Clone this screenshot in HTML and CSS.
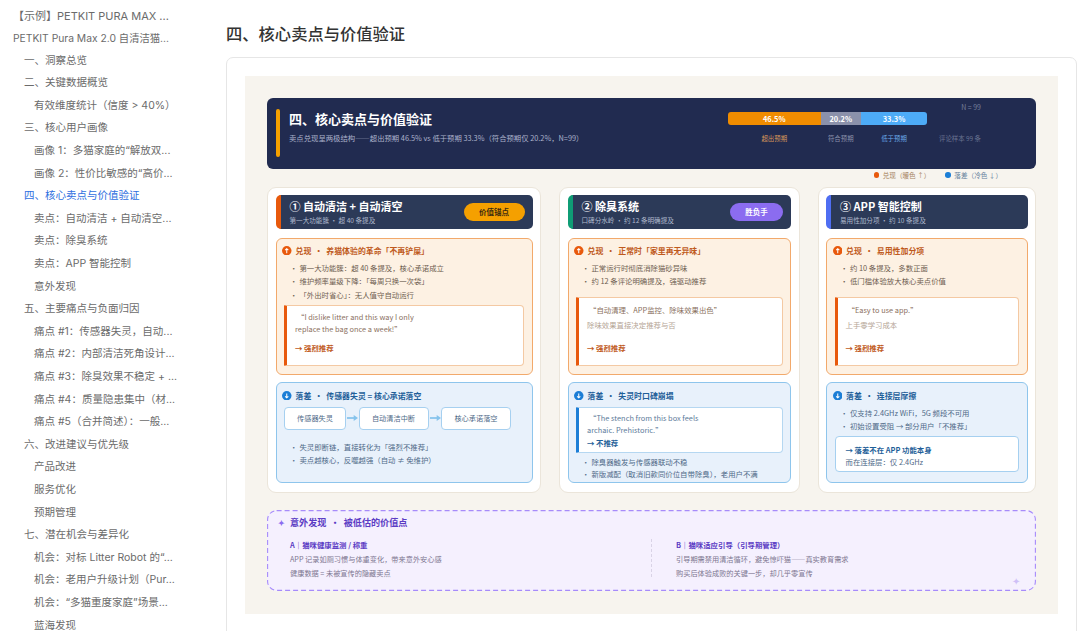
FILE: index.html
```html
<!DOCTYPE html>
<html lang="zh-CN">
<head>
  <meta charset="UTF-8">
  <title>四、核心卖点与价值验证</title>
  <link rel="stylesheet" href="styles.css">
</head>
<body>

<nav class="toc">
  <a class="lv1 root">【示例】PETKIT PURA MAX ...</a>
  <a class="lv1 doc">PETKIT Pura Max 2.0 自清洁猫...</a>
  <a class="lv2">一、洞察总览</a>
  <a class="lv2">二、关键数据概览</a>
  <a class="lv3">有效维度统计（信度 &gt; 40%）</a>
  <a class="lv2">三、核心用户画像</a>
  <a class="lv3">画像 1：多猫家庭的“解放双...</a>
  <a class="lv3">画像 2：性价比敏感的“高价...</a>
  <a class="lv2 active">四、核心卖点与价值验证</a>
  <a class="lv3">卖点：自动清洁 + 自动清空...</a>
  <a class="lv3">卖点：除臭系统</a>
  <a class="lv3">卖点：APP 智能控制</a>
  <a class="lv3">意外发现</a>
  <a class="lv2">五、主要痛点与负面归因</a>
  <a class="lv3">痛点 #1：传感器失灵，自动...</a>
  <a class="lv3">痛点 #2：内部清洁死角设计...</a>
  <a class="lv3">痛点 #3：除臭效果不稳定 + ...</a>
  <a class="lv3">痛点 #4：质量隐患集中（材...</a>
  <a class="lv3">痛点 #5（合并简述）：一般...</a>
  <a class="lv2">六、改进建议与优先级</a>
  <a class="lv3">产品改进</a>
  <a class="lv3">服务优化</a>
  <a class="lv3">预期管理</a>
  <a class="lv2">七、潜在机会与差异化</a>
  <a class="lv3">机会：对标 Litter Robot 的“...</a>
  <a class="lv3">机会：老用户升级计划（Pur...</a>
  <a class="lv3">机会：“多猫重度家庭”场景...</a>
  <a class="lv3">蓝海发现</a>
</nav>

<main class="content">
  <h2 class="page-title">四、核心卖点与价值验证</h2>

  <div class="frame">
    <div class="canvas">

      <header class="hero">
        <span class="hero-accent"></span>
        <div class="hero-text">
          <h3>四、核心卖点与价值验证</h3>
          <p>卖点兑现呈两极结构——超出预期 46.5% vs 低于预期 33.3%（符合预期仅 20.2%，N=99）</p>
        </div>
        <div class="chart">
          <div class="chart-n">N = 99</div>
          <div class="chart-grid">
            <div class="seg seg-over">46.5%</div>
            <div class="seg seg-meet">20.2%</div>
            <div class="seg seg-under">33.3%</div>
            <div></div>
            <div class="lab lab-over">超出预期</div>
            <div class="lab lab-meet">符合预期</div>
            <div class="lab lab-under">低于预期</div>
            <div class="lab lab-total">评论样本 99 条</div>
          </div>
        </div>
      </header>

      <div class="legend">
        <span class="legend-item warm"><i></i>兑现（暖色 ↑）</span>
        <span class="legend-item cold"><i></i>落差（冷色 ↓）</span>
      </div>

      <div class="cols">

        <section class="card">
          <div class="card-head head-orange">
            <div class="head-text">
              <h4>① 自动清洁 + 自动清空</h4>
              <p>第一大功能簇 · 超 40 条提及</p>
            </div>
            <span class="badge badge-orange">价值锚点</span>
          </div>
          <div class="panel up">
            <div class="panel-title">
              <svg class="dir" viewBox="0 0 12 12"><circle cx="6" cy="6" r="6" fill="#e8590c"/><path d="M6 9V3.4M4 5.3l2-2 2 2" fill="none" stroke="#fff" stroke-width="1.3"/></svg>
              <span>兑现&nbsp;&nbsp;·&nbsp;&nbsp;养猫体验的革命「不再铲屎」</span>
            </div>
            <ul>
              <li>第一大功能簇：超 40 条提及，核心承诺成立</li>
              <li>维护频率量级下降：「每周只换一次袋」</li>
              <li>「外出时省心」：无人值守自动运行</li>
            </ul>
            <div class="quote quote-short">
              <p class="en">“I dislike litter and this way I only<br>replace the bag once a week!”</p>
              <strong>→ 强烈推荐</strong>
            </div>
          </div>
          <div class="panel down">
            <div class="panel-title">
              <svg class="dir" viewBox="0 0 12 12"><circle cx="6" cy="6" r="6" fill="#1c7ed6"/><path d="M6 3v5.6M4 6.7l2 2 2-2" fill="none" stroke="#fff" stroke-width="1.3"/></svg>
              <span>落差&nbsp;&nbsp;·&nbsp;&nbsp;传感器失灵 = 核心承诺落空</span>
            </div>
            <div class="flow">
              <span class="step step-a">传感器失灵</span>
              <svg class="flow-arrow" viewBox="0 0 13 8"><path d="M1 4h8" stroke="#85c3ec" stroke-width="1.8"/><path d="M8 .8 12.5 4 8 7.2z" fill="#85c3ec"/></svg>
              <span class="step step-b">自动清洁中断</span>
              <svg class="flow-arrow" viewBox="0 0 13 8"><path d="M1 4h8" stroke="#85c3ec" stroke-width="1.8"/><path d="M8 .8 12.5 4 8 7.2z" fill="#85c3ec"/></svg>
              <span class="step step-b">核心承诺落空</span>
            </div>
            <ul class="list-flow">
              <li>失灵即断链，直接转化为「强烈不推荐」</li>
              <li>卖点越核心，反噬越强（自动 ≠ 免维护）</li>
            </ul>
          </div>
        </section>

        <section class="card">
          <div class="card-head head-green">
            <div class="head-text">
              <h4>② 除臭系统</h4>
              <p>口碑分水岭 · 约 12 条明确提及</p>
            </div>
            <span class="badge badge-purple">胜负手</span>
          </div>
          <div class="panel up">
            <div class="panel-title">
              <svg class="dir" viewBox="0 0 12 12"><circle cx="6" cy="6" r="6" fill="#e8590c"/><path d="M6 9V3.4M4 5.3l2-2 2 2" fill="none" stroke="#fff" stroke-width="1.3"/></svg>
              <span>兑现&nbsp;&nbsp;·&nbsp;&nbsp;正常时「家里再无异味」</span>
            </div>
            <ul>
              <li>正常运行时彻底消除猫砂异味</li>
              <li>约 12 条评论明确提及，强驱动推荐</li>
            </ul>
            <div class="quote quote-tall">
              <p class="en">“自动清理、APP监控、除味效果出色”</p>
              <p class="note">除味效果直接决定推荐与否</p>
              <strong>→ 强烈推荐</strong>
            </div>
          </div>
          <div class="panel down">
            <div class="panel-title">
              <svg class="dir" viewBox="0 0 12 12"><circle cx="6" cy="6" r="6" fill="#1c7ed6"/><path d="M6 3v5.6M4 6.7l2 2 2-2" fill="none" stroke="#fff" stroke-width="1.3"/></svg>
              <span>落差&nbsp;&nbsp;·&nbsp;&nbsp;失灵时口碑崩塌</span>
            </div>
            <div class="quote quote-blue">
              <p class="en">“The stench from this box feels<br>archaic. Prehistoric.”</p>
              <strong>→ 不推荐</strong>
            </div>
            <ul class="list-after">
              <li>除臭器触发与传感器联动不稳</li>
              <li>新版减配（取消旧款同价位自带除臭），老用户不满</li>
            </ul>
          </div>
        </section>

        <section class="card">
          <div class="card-head head-blue">
            <div class="head-text">
              <h4>③ APP 智能控制</h4>
              <p>易用性加分项 · 约 10 条提及</p>
            </div>
          </div>
          <div class="panel up">
            <div class="panel-title">
              <svg class="dir" viewBox="0 0 12 12"><circle cx="6" cy="6" r="6" fill="#e8590c"/><path d="M6 9V3.4M4 5.3l2-2 2 2" fill="none" stroke="#fff" stroke-width="1.3"/></svg>
              <span>兑现&nbsp;&nbsp;·&nbsp;&nbsp;易用性加分项</span>
            </div>
            <ul>
              <li>约 10 条提及，多数正面</li>
              <li>低门槛体验放大核心卖点价值</li>
            </ul>
            <div class="quote quote-tall">
              <p class="en">“Easy to use app.”</p>
              <p class="note">上手零学习成本</p>
              <strong>→ 强烈推荐</strong>
            </div>
          </div>
          <div class="panel down">
            <div class="panel-title">
              <svg class="dir" viewBox="0 0 12 12"><circle cx="6" cy="6" r="6" fill="#1c7ed6"/><path d="M6 3v5.6M4 6.7l2 2 2-2" fill="none" stroke="#fff" stroke-width="1.3"/></svg>
              <span>落差&nbsp;&nbsp;·&nbsp;&nbsp;连接层摩擦</span>
            </div>
            <ul class="list-top">
              <li>仅支持 2.4GHz WiFi，5G 频段不可用</li>
              <li>初始设置受阻 → 部分用户「不推荐」</li>
            </ul>
            <div class="verdict">
              <strong>→ 落差不在 APP 功能本身</strong>
              <p>而在连接层：仅 2.4GHz</p>
            </div>
          </div>
        </section>

      </div>

      <section class="extra">
        <svg class="extra-border" viewBox="0 0 769 81"><rect x=".6" y=".6" width="767.8" height="79.8" rx="9" fill="none" stroke="#a78bfa" stroke-width="1.1" stroke-dasharray="5 3"/></svg>
        <div class="extra-title"><span class="spark">✦</span><span>意外发现&nbsp;&nbsp;·&nbsp;&nbsp;被低估的价值点</span></div>
        <div class="extra-cols">
          <div class="extra-col">
            <h5>A｜猫咪健康监测 / 称重</h5>
            <p>APP 记录如厕习惯与体重变化，带来意外安心感</p>
            <p>健康数据 = 未被宣传的隐藏卖点</p>
          </div>
          <div class="extra-col extra-col-b">
            <h5>B｜猫咪适应引导（引导期管理）</h5>
            <p>引导期需禁用清洁循环，避免惊吓猫——真实教育需求</p>
            <p>购买后体验成败的关键一步，却几乎零宣传</p>
          </div>
        </div>
        <div class="extra-foot">✦</div>
      </section>

    </div>
  </div>
</main>

</body>
</html>
```

FILE: styles.css
```css
* {
  box-sizing: border-box;
}

html,
body {
  height: 631px;
  margin: 0;
  overflow: hidden;
}

body {
  display: flex;
  background-color: #fff;
  font-family: "Inter", "Noto Sans CJK SC", sans-serif;
}

h2, h3, h4, h5, p, ul {
  margin: 0;
  padding: 0;
}

/* sidebar */
.toc {
  display: flex;
  flex-direction: column;
  flex: none;
  width: 226px;
  padding-top: 4.5px;
}

.toc a {
  flex: none;
  height: 22.6px;
  line-height: 22.6px;
  font-size: 10.5px;
  color: #6b6b6b;
  white-space: nowrap;
}

.lv1 {
  padding-left: 13px;
}

.toc a.root {
  font-size: 11px;
}

.toc a.doc {
  font-size: 10.3px;
}

.lv2 {
  padding-left: 24px;
}

.lv3 {
  padding-left: 34px;
}

.toc a.active {
  color: #2f6fe0;
}

/* main */
.content {
  flex: 1;
  min-width: 0;
  padding-right: 3px;
}

.page-title {
  height: 57px;
  padding-top: 22px;
  line-height: 24px;
  font-size: 16.3px;
  font-weight: 500;
  color: #333;
}

.frame {
  height: 600px;
  padding: 18px 18px 0;
  border: 1px solid #e6e6e6;
  border-radius: 7px;
}

.canvas {
  height: 538px;
  padding: 22px;
  background-color: #f7f4ee;
  font-family: "Noto Sans CJK SC", sans-serif;
}

/* hero */
.hero {
  display: flex;
  height: 71px;
  padding-left: 9px;
  background-color: #212b50;
  border-radius: 6px;
}

.hero-accent {
  flex: none;
  width: 4px;
  height: 48px;
  margin-top: 11px;
  background-color: #f5a000;
  border-radius: 2px;
}

.hero-text {
  flex: 1;
  padding: 13px 0 0 9px;
}

.hero-text h3 {
  line-height: 16px;
  font-size: 13px;
  font-weight: 700;
  color: #fff;
}

.hero-text p {
  margin-top: 6px;
  line-height: 10px;
  font-size: 7.35px;
  color: #aab1ca;
  white-space: nowrap;
}

.chart {
  flex: none;
  width: 253px;
  margin-right: 55px;
  padding-top: 4.5px;
}

.chart-n {
  height: 9.5px;
  line-height: 9px;
  font-size: 7px;
  text-align: right;
  color: #767f9c;
}

.chart-grid {
  display: grid;
  grid-template-columns: 92.5px 40.5px 66px 54px;
  grid-template-rows: 13px auto;
  row-gap: 8.5px;
}

.seg {
  line-height: 13px;
  font-size: 7.4px;
  font-weight: 700;
  text-align: center;
  color: #fff;
}

.seg-over {
  background-color: #f08c00;
  border-radius: 3px 0 0 3px;
}

.seg-meet {
  background-color: #8b91ab;
}

.seg-under {
  background-color: #4dabf7;
  border-radius: 0 3px 3px 0;
}

.lab {
  line-height: 9px;
  font-size: 6.4px;
  text-align: center;
  white-space: nowrap;
}

.lab-over {
  color: #d9985a;
}

.lab-meet {
  color: #8b91ab;
}

.lab-under {
  color: #6aa8e8;
}

.lab-total {
  text-align: right;
  color: #6a7390;
}

/* legend */
.legend {
  display: flex;
  justify-content: flex-end;
  gap: 15px;
  height: 12px;
  margin-bottom: 5.5px;
  padding-right: 34px;
  line-height: 12px;
  font-size: 6.6px;
}

.legend-item {
  display: flex;
  align-items: center;
  gap: 3.5px;
}

.legend-item i {
  width: 5.5px;
  height: 5.5px;
  border-radius: 50%;
}

.warm {
  color: #a5835f;
}

.warm i {
  background-color: #e8590c;
}

.cold {
  color: #64809c;
}

.cold i {
  background-color: #1c7ed6;
}

/* columns */
.cols {
  display: grid;
  grid-template-columns: 274px 240.5px 218.5px;
  column-gap: 18px;
  height: 306px;
}

.card {
  display: flex;
  flex-direction: column;
  padding: 7.5px;
  background-color: #fff;
  border: 1px solid #ebe5da;
  border-radius: 9px;
}

.card-head {
  display: flex;
  align-items: center;
  justify-content: space-between;
  flex: none;
  height: 33.5px;
  margin-bottom: 9px;
  padding: 0 8px 0 9px;
  background-color: #2c3a58;
  border-left: 5.5px solid;
  border-radius: 5px;
}

.head-orange {
  border-left-color: #e8590c;
}

.head-green {
  border-left-color: #0f9d75;
}

.head-blue {
  border-left-color: #4f6ef2;
}

.head-text h4 {
  line-height: 15px;
  font-size: 11px;
  font-weight: 700;
  color: #fff;
  white-space: nowrap;
}

.head-text p {
  margin-top: .5px;
  line-height: 10px;
  font-size: 6.6px;
  color: #aeb8cc;
  white-space: nowrap;
}

.badge {
  flex: none;
  height: 18px;
  line-height: 18px;
  border-radius: 9px;
  font-size: 7.5px;
  font-weight: 700;
  text-align: center;
}

.badge-orange {
  width: 61px;
  background-color: #f5a000;
  color: #3a2a10;
}

.badge-purple {
  width: 53px;
  background-color: #8b6cf0;
  color: #fff;
}

/* panels */
.panel {
  display: flex;
  flex-direction: column;
  flex: none;
  padding: 6px 7.5px 8px;
  border: 1px solid;
  border-radius: 6px;
  font-size: 7.4px;
}

.panel.up {
  height: 137px;
  margin-bottom: 7px;
  background-color: #fdf1e3;
  border-color: #f2a96b;
  color: #6e5d50;
}

.panel.down {
  height: 101.5px;
  padding-top: 7px;
  background-color: #e8f1fb;
  border-color: #8ec5ec;
  color: #4f6a88;
}

.panel-title {
  display: flex;
  align-items: center;
  gap: 4px;
  flex: none;
  height: 12px;
  margin-left: -2px;
  font-size: 7.9px;
  font-weight: 700;
  white-space: nowrap;
}

.up .panel-title {
  color: #bf5a1c;
}

.down .panel-title {
  color: #1f5f99;
}

.dir {
  flex: none;
  width: 9.5px;
  height: 9.5px;
}

.panel ul {
  flex: none;
  margin-top: 4.5px;
  padding-left: 6px;
  list-style: none;
}

.panel li {
  display: flex;
  gap: 2px;
  line-height: 13.3px;
  white-space: nowrap;
}

.panel li::before {
  content: "·";
}

.panel ul.list-flow {
  margin-top: 10px;
}

.panel ul.list-after {
  margin-top: 3px;
}

.panel ul.list-after li {
  line-height: 12.5px;
}

.panel ul.list-top {
  margin-top: 4px;
}

/* quotes */
.quote {
  display: flex;
  flex-direction: column;
  flex: none;
  margin-top: auto;
  padding: 5.5px 8px 10.5px;
  background-color: #fff;
  border: 1px solid #f4c9a3;
  border-left: 3px solid #e8590c;
  border-radius: 1px 4px 4px 1px;
  line-height: 12px;
  color: #8a7060;
}

.quote .en {
  text-indent: 2px;
  white-space: nowrap;
}

.quote .note {
  margin-top: 2.5px;
  color: #b5a596;
}

.quote strong {
  margin-top: auto;
  font-weight: 700;
  color: #bf5a1c;
}

.quote-short {
  height: 61px;
}

.quote-tall {
  height: 69px;
  padding-top: 6.5px;
}

.quote-blue {
  height: 46px;
  margin-top: 5px;
  padding: 4.5px 8px 2.5px;
  border-color: #b5d7f1;
  border-left-color: #1c7ed6;
  color: #5b7a99;
}

.quote-blue strong {
  color: #1f5f99;
}

/* sensor flow */
.flow {
  display: flex;
  align-items: center;
  flex: none;
  margin-top: 5px;
  font-size: 7.2px;
}

.step {
  height: 23px;
  line-height: 21px;
  background-color: #fff;
  border: 1px solid #a6d0f0;
  border-radius: 4px;
  text-align: center;
}

.step-a {
  width: 62px;
}

.step-b {
  width: 70px;
}

.flow-arrow {
  flex: none;
  width: 12.5px;
  height: 8px;
}

.verdict {
  flex: none;
  height: 36px;
  margin-top: auto;
  margin-bottom: 2px;
  padding: 7px 10px 0;
  background-color: #fff;
  border: 1px solid #a6d0f0;
  border-radius: 4px;
  line-height: 12px;
}

.verdict strong {
  display: block;
  color: #1f5f99;
}

/* extra */
.extra {
  position: relative;
  display: flex;
  flex-direction: column;
  height: 81px;
  margin-top: 17.5px;
  padding: 6px 16px 0 11px;
  background-color: #f5f0fe;
  border-radius: 9px;
}

.extra-border {
  position: absolute;
  top: 0;
  left: 0;
  width: 100%;
  height: 100%;
}

.extra-title {
  display: flex;
  align-items: center;
  gap: 5px;
  flex: none;
  height: 12px;
  font-size: 9.1px;
  font-weight: 700;
  color: #5b3cc4;
}

.spark {
  font-size: 8px;
  color: #8b6cf0;
}

.extra-cols {
  display: grid;
  grid-template-columns: 361px 1fr;
  flex: none;
  margin-top: 11px;
  padding-left: 12px;
}

.extra-col {
  height: 38px;
  font-size: 7.2px;
  line-height: 13px;
  color: #7d7690;
  white-space: nowrap;
}

.extra-col h5 {
  margin-bottom: 2px;
  line-height: 12px;
  font-size: 7.4px;
  font-weight: 700;
  color: #5b3cc4;
}

.extra-col p {
  margin-top: 1px;
}

.extra-col-b {
  padding-left: 24px;
  border-left: 1px dashed #d9d3e6;
}

.extra-foot {
  height: 10px;
  margin-top: -1px;
  line-height: 10px;
  font-size: 10px;
  text-align: right;
  color: #cfc0f7;
}
```
